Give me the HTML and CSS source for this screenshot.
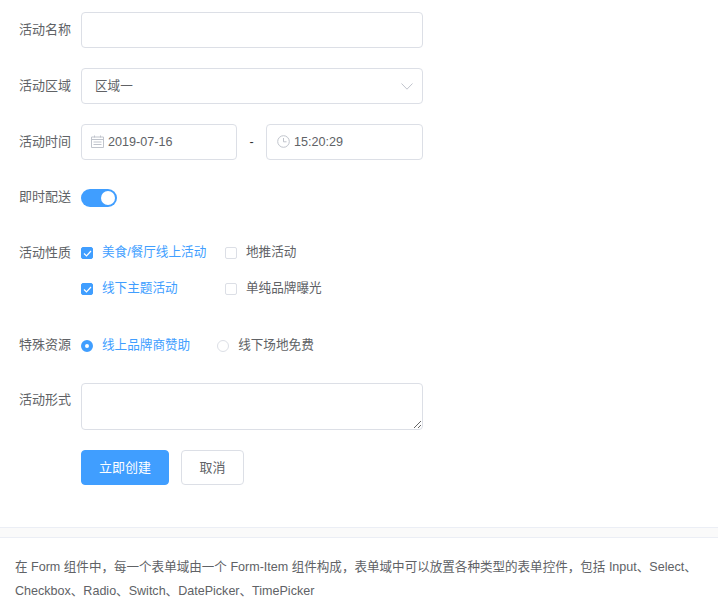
FILE: index.html
```html
<!DOCTYPE html>
<html lang="zh-CN">
<head>
    <meta charset="UTF-8">
    <meta name="viewport" content="width=device-width, initial-scale=1.0">
    <title>Form</title>
    <link rel="stylesheet" href="styles.css">
</head>
<body>
    <form class="form">
        <div class="form-item">
            <label class="form-label">活动名称</label>
            <input class="input" type="text">
        </div>
        <div class="form-item">
            <label class="form-label">活动区域</label>
            <div class="input select">
                <span class="select-value">区域一</span>
                <svg class="select-arrow" viewBox="0 0 12 7" width="12" height="7"><path d="M.5.5 6 6.200 11.500.5" fill="none" stroke="#c0c4cc" stroke-width="1"/></svg>
            </div>
        </div>
        <div class="form-item">
            <label class="form-label">活动时间</label>
            <div class="date-range">
                <div class="input picker">
                    <svg viewBox="0 0 13 13" width="13" height="13" fill="none" stroke="#c0c4cc" stroke-width="1"><path d="M.5 2h12v10.500H.500zM.5 4.500h12M3.500.5v2M9.500.5v2M2.500 7h8M2.500 9.500h8"/></svg>
                    <span>2019-07-16</span>
                </div>
                <span class="range-sep">-</span>
                <div class="input picker picker-time">
                    <svg viewBox="0 0 13 13" width="13" height="13" fill="none" stroke="#c0c4cc" stroke-width="1"><circle cx="6.500" cy="6.500" r="5.800"/><path d="M6.500 3v3.800h3"/></svg>
                    <span>15:20:29</span>
                </div>
            </div>
        </div>
        <div class="form-item form-item-switch">
            <label class="form-label form-label-switch">即时配送</label>
            <span class="switch"><span class="switch-knob"></span></span>
        </div>
        <div class="form-item form-item-auto">
            <label class="form-label form-label-group">活动性质</label>
            <div class="checkbox-group">
                <div class="checkbox checked">
                    <span class="checkbox-box"><svg viewBox="0 0 9 7" width="9" height="7"><path d="M1 3.500 3.500 6 8 1" fill="none" stroke="#fff" stroke-width="1.200"/></svg></span>
                    美食/餐厅线上活动
                </div>
                <div class="checkbox">
                    <span class="checkbox-box"></span>
                    地推活动
                </div>
                <div class="checkbox checked">
                    <span class="checkbox-box"><svg viewBox="0 0 9 7" width="9" height="7"><path d="M1 3.500 3.500 6 8 1" fill="none" stroke="#fff" stroke-width="1.200"/></svg></span>
                    线下主题活动
                </div>
                <div class="checkbox">
                    <span class="checkbox-box"></span>
                    单纯品牌曝光
                </div>
            </div>
        </div>
        <div class="form-item form-item-radio">
            <label class="form-label form-label-group">特殊资源</label>
            <div class="radio-group">
                <div class="radio checked"><span class="radio-dot"></span>线上品牌商赞助</div>
                <div class="radio"><span class="radio-dot"></span>线下场地免费</div>
            </div>
        </div>
        <div class="form-item form-item-auto">
            <label class="form-label">活动形式</label>
            <textarea class="textarea"></textarea>
        </div>
        <div class="form-actions">
            <button class="btn btn-primary" type="button">立即创建</button>
            <button class="btn" type="button">取消</button>
        </div>
    </form>
    <div class="band"></div>
    <p class="tip">在 Form 组件中，每一个表单域由一个 Form-Item 组件构成，表单域中可以放置各种类型的表单控件，包括 Input、Select、Checkbox、Radio、Switch、DatePicker、TimePicker</p>
</body>
</html>
```

FILE: styles.css
```css
* {
    margin: 0;
    padding: 0;
    box-sizing: border-box;
}

body {
    font-family: 'Liberation Sans', 'Noto Sans CJK SC', sans-serif;
    font-size: 12.6px;
    color: #606266;
    background-color: #fff;
}

.form {
    padding-top: 12px;
    width: 423px;
}

.form-item {
    display: flex;
    align-items: center;
    min-height: 36px;
    margin-bottom: 20px;
}

.form-item-switch {
    margin-bottom: 18px;
}

.form-item-auto {
    align-items: flex-start;
}

.form-item-radio {
    margin-bottom: 21px;
}

.form-label {
    flex: none;
    width: 81px;
    padding-left: 19px;
    font-size: 13px;
    line-height: 34px;
}

.form-label-switch {
    padding-bottom: 2px;
}

.form-label-group {
    height: 36px;
    line-height: 38px;
}

.input {
    display: flex;
    align-items: center;
    flex: 1;
    min-width: 0;
    height: 36px;
    border: 1px solid #dcdfe6;
    border-radius: 4px;
    background-color: #fff;
    font: inherit;
    color: #606266;
}

.select {
    justify-content: space-between;
    padding: 0 9px 0 13px;
}

.select-value {
    padding-bottom: 3px;
}

.date-range {
    flex: 1;
    display: grid;
    grid-template-columns: 156px 1fr 157px;
    align-items: center;
}

.range-sep {
    text-align: center;
    color: #303133;
}

.picker {
    gap: 4px;
    padding-left: 9px;
    padding-bottom: 1px;
}

.picker-time {
    padding-left: 10px;
}

.switch {
    position: relative;
    display: block;
    width: 36px;
    height: 18px;
    border-radius: 9px;
    background-color: #409eff;
}

.switch-knob {
    position: absolute;
    top: 2px;
    right: 2px;
    width: 14px;
    height: 14px;
    border-radius: 50%;
    background-color: #fff;
}

.checkbox-group {
    display: grid;
    grid-template-columns: 144px auto;
    grid-auto-rows: 36px;
    align-items: center;
}

.checkbox,
.radio {
    display: flex;
    align-items: center;
    gap: 9px;
    padding-bottom: 2px;
}

.checkbox {
    padding-bottom: 4px;
}

.checkbox.checked,
.radio.checked {
    color: #409eff;
}

.checkbox-box {
    display: flex;
    align-items: center;
    justify-content: center;
    width: 12px;
    height: 12px;
    margin-top: 6px;
    border: 1px solid #dcdfe6;
    border-radius: 2px;
    background-color: #fff;
}

.checked .checkbox-box {
    border-color: #409eff;
    background-color: #409eff;
}

.radio-group {
    display: flex;
    gap: 27px;
}

.radio-dot {
    width: 12px;
    height: 12px;
    margin-top: 6px;
    border: 1px solid #dcdfe6;
    border-radius: 50%;
}

.radio.checked .radio-dot {
    border: 4px solid #409eff;
    background-color: #fff;
}

.textarea {
    flex: 1;
    display: block;
    height: 47px;
    border: 1px solid #dcdfe6;
    border-radius: 4px;
    font: inherit;
}

.form-actions {
    display: flex;
    gap: 12px;
    padding-left: 81px;
}

.btn {
    width: 63px;
    height: 35px;
    padding-bottom: 2px;
    border: 1px solid #dcdfe6;
    border-radius: 4px;
    background-color: #fff;
    font: inherit;
    font-size: 13px;
    color: #606266;
}

.btn-primary {
    width: 88px;
    border-color: #409eff;
    background-color: #409eff;
    color: #fff;
}

.band {
    height: 11px;
    margin-top: 42px;
    border-top: 1px solid #ebeef5;
    border-bottom: 1px solid #ebeef5;
    background-color: #fafafa;
}

.tip {
    padding: 17px 15px 0;
    font-size: 12.55px;
    line-height: 24px;
}
```
